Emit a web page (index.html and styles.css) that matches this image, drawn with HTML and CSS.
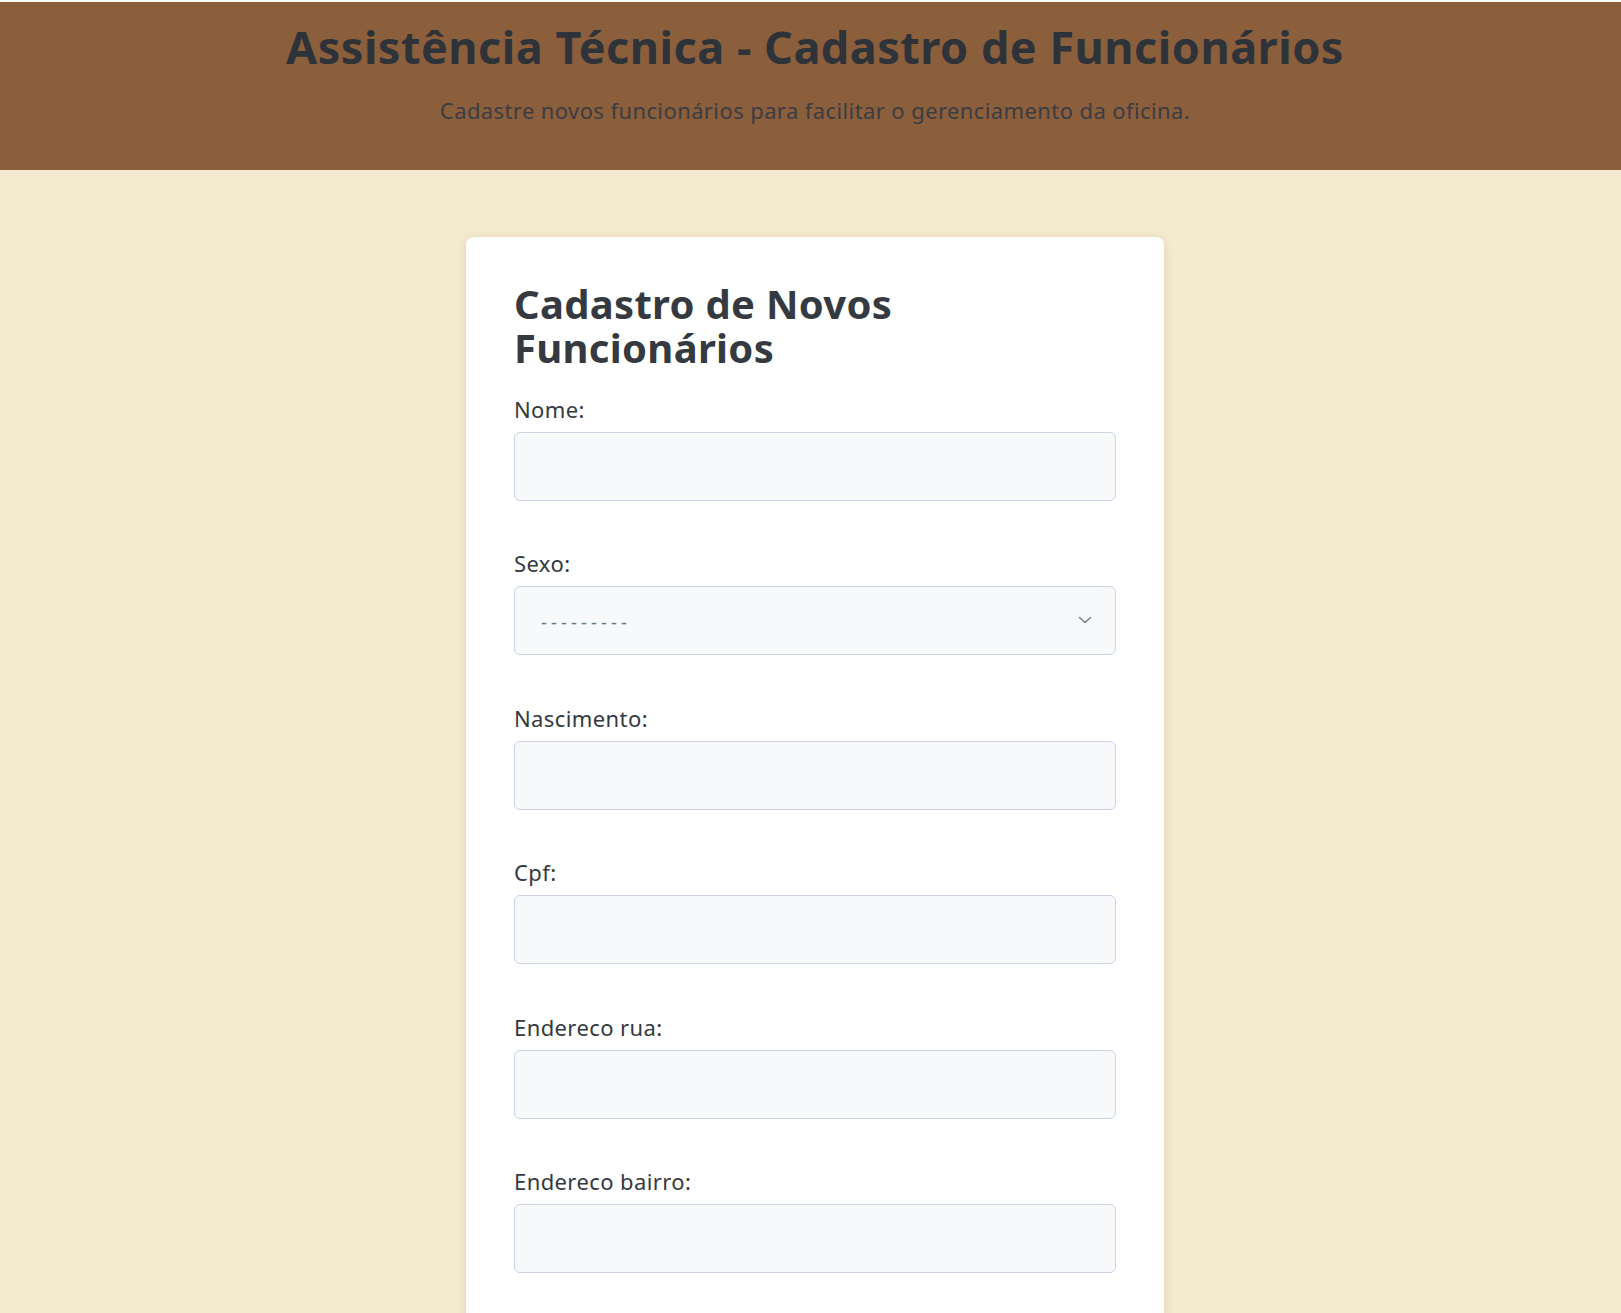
FILE: index.html
```html
<!DOCTYPE html>
<html lang="pt-BR">
<head>
<meta charset="utf-8">
<title>Assistência Técnica - Cadastro de Funcionários</title>
<link rel="stylesheet" href="styles.css">
</head>
<body>
<header class="site-header">
  <h1 class="site-title">Assistência Técnica - Cadastro de Funcionários</h1>
  <p class="site-lead">Cadastre novos funcionários para facilitar o gerenciamento da oficina.</p>
</header>
<main class="page">
  <section class="card">
    <h2 class="card-title">Cadastro de Novos Funcionários</h2>
    <form class="form">
      <div class="field">
        <label class="field-label" for="nome">Nome:</label>
        <input class="field-input" id="nome" type="text">
      </div>
      <div class="field">
        <label class="field-label" for="sexo">Sexo:</label>
        <div class="select-wrap">
          <select class="field-input field-select" id="sexo">
            <option>---------</option>
            <option>Masculino</option>
            <option>Feminino</option>
          </select>
          <svg class="select-chevron" width="14" height="8" viewBox="0 0 14 8" aria-hidden="true"><path d="M1.5 1.5 L7 6.5 L12.5 1.5" fill="none" stroke="#7b8190" stroke-width="1.6" stroke-linecap="round" stroke-linejoin="round"/></svg>
        </div>
      </div>
      <div class="field">
        <label class="field-label" for="nasc">Nascimento:</label>
        <input class="field-input" id="nasc" type="text">
      </div>
      <div class="field">
        <label class="field-label" for="cpf">Cpf:</label>
        <input class="field-input" id="cpf" type="text">
      </div>
      <div class="field">
        <label class="field-label" for="rua">Endereco rua:</label>
        <input class="field-input" id="rua" type="text">
      </div>
      <div class="field">
        <label class="field-label" for="bairro">Endereco bairro:</label>
        <input class="field-input" id="bairro" type="text">
      </div>
    </form>
  </section>
</main>
</body>
</html>
```
FILE: styles.css
```css
html {
  background: #f4eacf;
}
body {
  margin: 0;
  font-family: "Noto Sans", "Open Sans", sans-serif;
  color: #343a40;
  background: #f4eacf;
  border-top: 2px solid #ffffff;
}
.site-header {
  background: #8b5e3c;
  padding: 21px 0 45px 9px;
  text-align: center;
  height: 102px;
}
.site-title {
  margin: 0;
  font-size: 45px;
  line-height: 48px;
  font-weight: 700;
  color: #2e333a;
  letter-spacing: 0.5px;
}
.site-lead {
  margin: 24px 0 0;
  font-size: 22px;
  line-height: 30px;
  color: #3c3c42;
  letter-spacing: 0.4px;
}
.page {
  padding: 67px 0 0 9px;
  display: flex;
  justify-content: center;
}
.card {
  width: 602px;
  background: #ffffff;
  border-radius: 8px;
  padding: 45px 48px 48px;
  box-shadow: 0 2px 10px rgba(120, 95, 40, 0.18);
}
.card-title {
  margin: 0 0 24px;
  font-size: 40px;
  line-height: 44px;
  font-weight: 700;
  color: #343a40;
  width: 440px;
  letter-spacing: 0.3px;
}
.form {
  display: flex;
  flex-direction: column;
  gap: 47.4px;
}
.field {
  display: flex;
  flex-direction: column;
}
.field-label {
  font-size: 22px;
  line-height: 31px;
  margin-bottom: 7px;
  color: #343a40;
  letter-spacing: 0.4px;
}
.field-input {
  box-sizing: border-box;
  width: 100%;
  height: 69px;
  margin: 0;
  padding: 0 26px;
  border: 1px solid #cdd2e6;
  border-radius: 6px;
  background: #f8f9fa;
  font-family: inherit;
  font-size: 18px;
  color: #6c757d;
}
.select-wrap {
  position: relative;
}
.field-select {
  appearance: none;
  -webkit-appearance: none;
  letter-spacing: 4.2px;
  padding-top: 2px;
}
.select-chevron {
  position: absolute;
  right: 24px;
  top: 30px;
}
```
